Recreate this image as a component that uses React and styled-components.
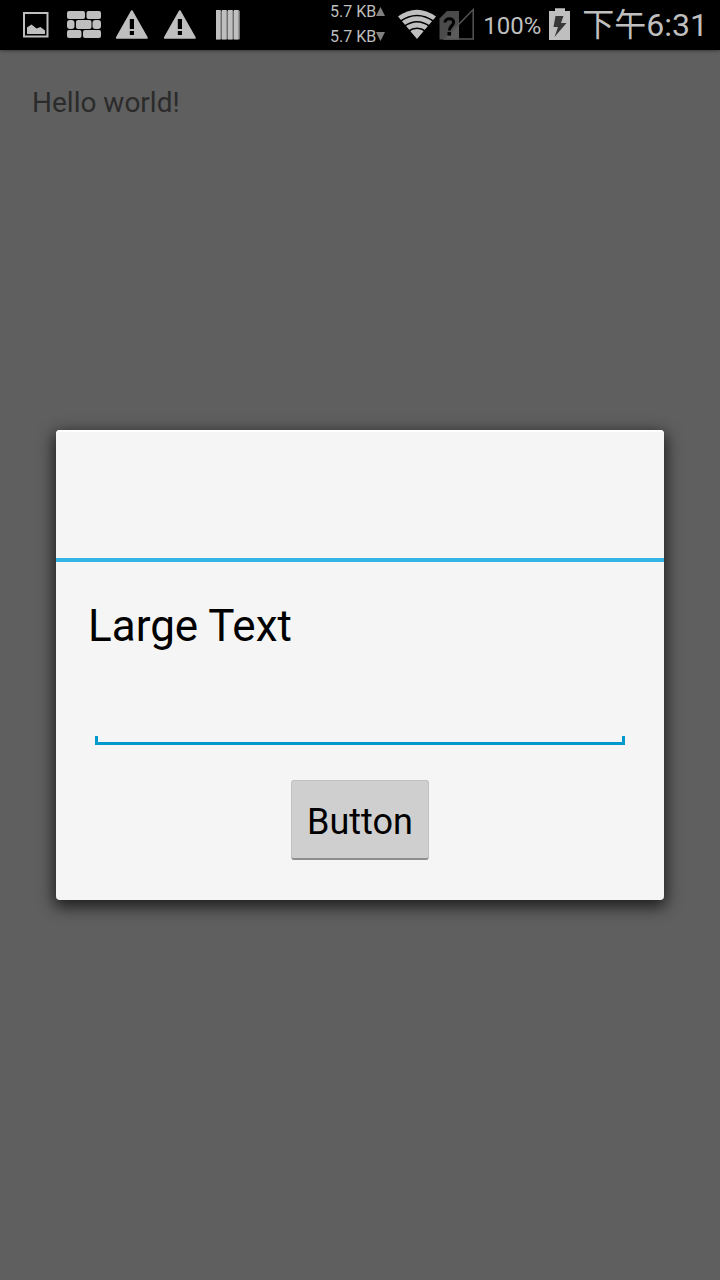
import React from "react";
import styled, { createGlobalStyle } from "styled-components";

const GlobalStyle = createGlobalStyle`
  *, *::before, *::after { box-sizing: border-box; }
  body {
    margin: 0;
    background: #5f5f5f;
    font-family: Roboto, "Noto Sans CJK SC", sans-serif;
  }
`;

const Screen = styled.div`
  display: flex;
  flex-direction: column;
  min-height: 100vh;
  background: #5f5f5f;
`;

const StatusBar = styled.header`
  display: flex;
  align-items: center;
  justify-content: space-between;
  height: 50px;
  padding: 0 12px;
  background: #000;
  color: #bfbfbf;
  box-shadow: 0 1px 3px rgba(0, 0, 0, 0.4);
  white-space: nowrap;
`;

const StatusGroup = styled.div`
  display: flex;
  align-items: center;
`;

const Icon = styled.svg`
  display: block;
  flex: none;
  width: ${(p) => p.$width}px;
  height: 50px;
`;

const Traffic = styled.div`
  display: flex;
  flex-direction: column;
  margin-right: 13px;
  padding-bottom: 2px;
`;

const TrafficLine = styled.div`
  display: flex;
  align-items: center;
  font-size: 16px;
  line-height: 25px;
`;

const Arrow = styled.svg`
  width: 9px;
  height: 9px;
`;

const Battery = styled.span`
  margin: 0 8px;
  padding-top: 2px;
  font-size: 24px;
  line-height: 48px;
`;

const Clock = styled.time`
  margin-left: 11px;
  font-size: 32px;
  line-height: 50px;
`;

const Content = styled.main`
  display: grid;
  flex: 1;
`;

const Activity = styled.section`
  grid-area: 1 / 1;
  padding: 32px;
`;

const Greeting = styled.p`
  margin: 0;
  color: #2b2b2b;
  font-size: 28px;
  line-height: 42px;
`;

const Dialog = styled.section`
  grid-area: 1 / 1;
  align-self: center;
  margin: 0 56px;
  border-radius: 4px;
  background: #f5f5f5;
  box-shadow: 0 5px 16px 2px rgba(0, 0, 0, 0.7), inset 0 2px 1px #fff;
`;

const DialogTitle = styled.div`
  height: 132px;
  border-bottom: 4px solid #33b5e5;
`;

const DialogBody = styled.form`
  display: flex;
  flex-direction: column;
  padding: 32px 32px 40px;
`;

const Label = styled.label`
  color: #000;
  font-size: 44px;
  line-height: 64px;
`;

const TextField = styled.input`
  height: 87px;
  margin: 0 7px 35px;
  padding: 24px 8px 8px;
  border: 0;
  border-bottom: 3px solid #0099cc;
  border-radius: 0;
  outline: 0;
  background:
    linear-gradient(#0099cc, #0099cc) left bottom / 3px 6px no-repeat,
    linear-gradient(#0099cc, #0099cc) right bottom / 3px 6px no-repeat;
  color: #000;
  font: 36px Roboto, sans-serif;
`;

const PushButton = styled.button`
  align-self: center;
  height: 80px;
  padding: 4px 15px 0;
  border: 1px solid #c2c2c2;
  border-bottom: 2px solid #8e8e8e;
  border-radius: 3px;
  background: #cfcfcf;
  color: #000;
  font: 36px Roboto, sans-serif;
`;

const PictureIcon = () => (
  <Icon $width={48} viewBox="12 0 48 50" aria-hidden="true">
    <rect x="24" y="13" width="23.5" height="23.5" fill="none" stroke="#bfbfbf" strokeWidth="2" />
    <path d="M27 34V27.500L31.500 24.500L36.500 28.500L40.500 27L45 30.500V34Z" fill="#bfbfbf" />
  </Icon>
);

const BricksIcon = () => (
  <Icon $width={48} viewBox="60 0 48 50" fill="#bfbfbf" aria-hidden="true">
    <rect x="67" y="11" width="18" height="8" rx="2" />
    <rect x="86.500" y="11" width="14.500" height="8" rx="2" />
    <rect x="67" y="20" width="7.500" height="9" rx="3" />
    <rect x="76" y="20" width="15.500" height="9" rx="2" />
    <rect x="92.500" y="20" width="8.500" height="9" rx="3" />
    <rect x="67" y="30" width="14.500" height="8" rx="2" />
    <rect x="83" y="30" width="18" height="8" rx="2" />
  </Icon>
);

const WarningIcon = () => (
  <Icon $width={48} viewBox="108 0 48 50" aria-hidden="true">
    <path d="M131.800 11.200L146.800 37.800H116.800Z" fill="#bfbfbf" stroke="#bfbfbf" strokeWidth="2" strokeLinejoin="round" />
    <path d="M129.800 19H134V29H129.800ZM129.800 31H134V35H129.800Z" fill="#000" />
  </Icon>
);

const BarsIcon = () => (
  <Icon $width={48} viewBox="204 0 48 50" aria-hidden="true">
    {[216, 222, 228, 234].map((x) => (
      <g key={x}>
        <path d={`M${x} 10H${x + 4}L${x + 6} 11V39L${x + 4} 40H${x}Z`} fill="#707070" />
        <rect x={x} y="10" width="4.500" height="29" fill="#bfbfbf" />
      </g>
    ))}
  </Icon>
);

const WifiIcon = () => (
  <Icon $width={38} viewBox="398 0 38 50" aria-hidden="true">
    <path d="M398 16.500Q416.800 3 436 16.500L417 39Z" fill="#bfbfbf" />
    <path
      d="M400 21.500Q417 9.500 434 21.500M404 26.500Q417 17 430 26.500M408 31.500Q417 25 426 31.500"
      fill="none"
      stroke="#000"
      strokeWidth="1.600"
    />
  </Icon>
);

const SimIcon = () => (
  <Icon $width={39} viewBox="436 0 39 50" aria-hidden="true">
    <path d="M439.500 39.500V18.500L447 11H459V39.500Z" fill="#4b4b4b" />
    <path d="M444 39.500L459 24V39.500Z" fill="#5c5c5c" />
    <path d="M444.500 39L473.200 9.500V39Z" fill="none" stroke="#555" strokeWidth="1.500" />
    <path d="M445 22.500C445 17.500 454 17.500 453.600 22.500C453.300 26 449.300 26 449.300 30.500" fill="none" stroke="#000" strokeWidth="3" />
    <rect x="447.500" y="32" width="3.600" height="3.600" fill="#000" />
  </Icon>
);

const ChargingIcon = () => (
  <Icon $width={22} viewBox="549 0 22 50" aria-hidden="true">
    <path d="M549 11H555V8.300H565V11H570V40H549Z" fill="#bfbfbf" />
    <path d="M555.500 16H563.500L561 23H566.500L554.500 37L558 27H553.500Z" fill="#383838" />
  </Icon>
);

export default function App() {
  return (
    <>
      <GlobalStyle />
      <Screen>
        <StatusBar>
          <StatusGroup>
            <PictureIcon />
            <BricksIcon />
            <WarningIcon />
            <WarningIcon />
            <BarsIcon />
          </StatusGroup>
          <StatusGroup>
            <Traffic>
              <TrafficLine>
                5.7 KB
                <Arrow viewBox="0 0 9 9" aria-hidden="true"><path d="M0 9L4.500 0L9 9Z" fill="#808080" /></Arrow>
              </TrafficLine>
              <TrafficLine>
                5.7 KB
                <Arrow viewBox="0 0 9 9" aria-hidden="true"><path d="M0 0H9L4.500 9Z" fill="#808080" /></Arrow>
              </TrafficLine>
            </Traffic>
            <WifiIcon />
            <SimIcon />
            <Battery>100%</Battery>
            <ChargingIcon />
            <Clock>下午6:31</Clock>
          </StatusGroup>
        </StatusBar>
        <Content>
          <Activity>
            <Greeting>Hello world!</Greeting>
          </Activity>
          <Dialog role="dialog" aria-labelledby="dialog-label">
            <DialogTitle />
            <DialogBody onSubmit={(e) => e.preventDefault()}>
              <Label id="dialog-label" htmlFor="dialog-text">Large Text</Label>
              <TextField id="dialog-text" type="text" />
              <PushButton type="submit">Button</PushButton>
            </DialogBody>
          </Dialog>
        </Content>
      </Screen>
    </>
  );
}
